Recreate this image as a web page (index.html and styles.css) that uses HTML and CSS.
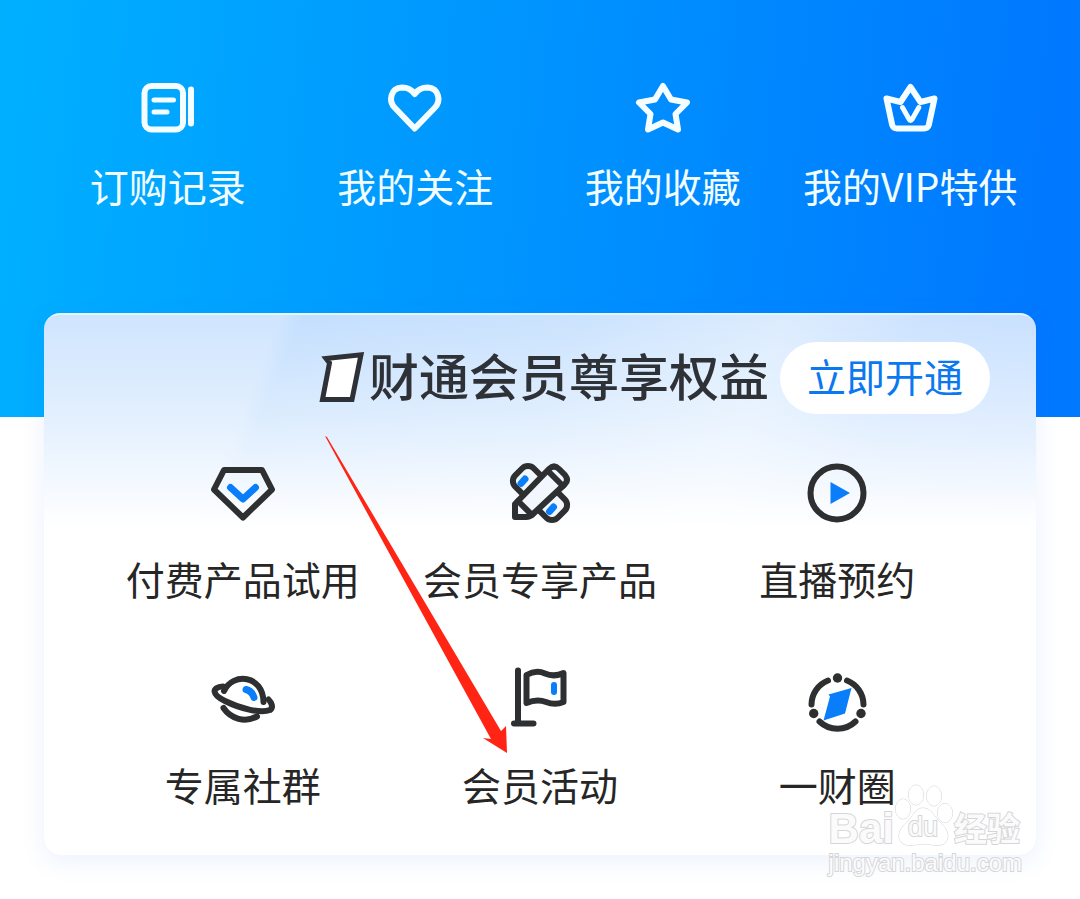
FILE: index.html
```html
<!DOCTYPE html>
<html lang="zh-CN">
<head>
<meta charset="utf-8">
<meta name="viewport" content="width=device-width, initial-scale=1">
<title>会员中心</title>
<link rel="stylesheet" href="styles.css">
</head>
<body>
<main class="page">
  <header class="hero">
    <nav class="shortcuts">
      <a class="entry" href="#orders">
        <svg class="icon light" viewBox="0 0 80 80" aria-hidden="true"><rect x="16.5" y="18" width="38.5" height="43.5" rx="7"/><path d="M63 21.500V55.500"/><path class="fine" d="M26 32H45.500M26 44H39"/></svg>
        <span class="label">订购记录</span>
      </a>
      <a class="entry" href="#follow">
        <svg class="icon light" viewBox="0 0 80 80" aria-hidden="true"><path d="M39.7 60.5L20 40C13 33 15.500 20 27 19.500C33 19.500 37 22 39.700 26C42.500 22 46.500 19.500 52.500 19.500C64 20 66.500 33 59.500 40Z"/></svg>
        <span class="label">我的关注</span>
      </a>
      <a class="entry" href="#favorites">
        <svg class="icon light" viewBox="0 0 80 80" aria-hidden="true"><path d="M40 18L48 31.500L64 34.500L52.500 46L55 61.500L40 54.500L25 61.500L27.500 46L16 34.500L32 31.500Z"/></svg>
        <span class="label">我的收藏</span>
      </a>
      <a class="entry" href="#vip">
        <svg class="icon light" viewBox="0 0 80 80" aria-hidden="true"><path d="M40.500 19L50.500 34L64.500 30.500L58.800 57Q57.800 60.500 54 60.500H27Q23.200 60.500 22.200 57L16.500 30.500L30.500 34Z"/><path class="fine" d="M32.500 39.500L39.300 51.500Q40.700 53.500 42 51.500L48.800 39.500"/></svg>
        <span class="label">我的VIP特供</span>
      </a>
    </nav>
  </header>

  <section class="card">
    <div class="card-head">
      <h1 class="title">
        <svg class="mark" viewBox="0 0 48 56" aria-hidden="true"><path d="M8 8.500L43 4.800L34 49.500H4.500L11.500 13Z"/></svg>
        <span class="title-text">财通会员尊享权益</span>
      </h1>
      <button class="open" type="button">立即开通</button>
    </div>
    <div class="benefits">
      <a class="entry" href="#trial">
        <svg class="icon dark" viewBox="0 0 80 80" aria-hidden="true"><path d="M21 17H59L69 36.500L40 64.500L11 36.500Z"/><path class="accent" d="M27.500 34.500L40 46L52.500 34.500"/></svg>
        <span class="label">付费产品试用</span>
      </a>
      <a class="entry" href="#exclusive">
        <svg class="icon dark" viewBox="0 0 80 80" aria-hidden="true"><rect class="pale" x="10" y="27" width="60" height="26" rx="8" transform="rotate(45 40 40)"/><path class="accent" d="M25 26L21 30.500M53.500 54L49.500 58.500"/><path class="pale" d="M15 64V51L49 16Q54 11 59 16L65 22Q69 27 65 31L33 61Q30 64 26 64Z"/><path d="M49 19L63 33M18 48L32 62"/></svg>
        <span class="label">会员专享产品</span>
      </a>
      <a class="entry" href="#live">
        <svg class="icon dark" viewBox="0 0 80 80" aria-hidden="true"><circle cx="40" cy="40" r="26.500"/><path class="solid" d="M33.500 29L53 40L33.500 51Z"/></svg>
        <span class="label">直播预约</span>
      </a>
      <a class="entry" href="#community">
        <svg class="icon dark thin" viewBox="0 0 80 80" aria-hidden="true"><path d="M21 32C30 13 60 16 60.500 43"/><path d="M20 27.500C8 28 9 36 22 42C38 50 58 54.500 67 51C71 48 68 43 65.500 40.500"/><path d="M20.500 49C28 60 42 64 54 57.500"/><path class="accent" d="M43 30.500Q49 32 51 38.500"/></svg>
        <span class="label">专属社群</span>
      </a>
      <a class="entry" href="#events">
        <svg class="icon dark thin" viewBox="0 0 80 80" aria-hidden="true"><path d="M18 11.500V64.500M14 64.500H33.500"/><path d="M26.500 16Q36 10.500 45 14.500T63.500 14V43Q55 46.500 46 43T26.500 44Z"/><path class="accent fine" d="M54 26V33"/></svg>
        <span class="label">会员活动</span>
      </a>
      <a class="entry" href="#circle">
        <svg class="icon dark thin" viewBox="0 0 80 80" aria-hidden="true"><path d="M14.500 45.500A26 26 0 0 1 31 21.500M50 21.500A26 26 0 0 1 66.500 45.500M22.500 62.500A26 26 0 0 0 58.500 62.500"/><g class="dots"><circle cx="40.500" cy="19" r="4.700"/><circle cx="16.700" cy="54.500" r="4.700"/><circle cx="64" cy="54.500" r="4.700"/></g><path class="solid" d="M31.500 35.500L54.500 29L48 54.500L26.500 61.500L33 37.500Z"/></svg>
        <span class="label">一财圈</span>
      </a>
    </div>
    <svg class="arrow" viewBox="0 0 184 318" aria-hidden="true"><path d="M0 0L2 1L176 295L181 290L182 317L158 302L166 303Z"/></svg>
    <div class="watermark">
      <div class="wm-brand">
        <span class="wm-latin">Bai</span>
        <span class="wm-paw"><svg viewBox="0 0 60 64" aria-hidden="true"><ellipse cx="9" cy="26" rx="7.500" ry="10"/><ellipse cx="22" cy="12" rx="7.500" ry="10"/><ellipse cx="40" cy="13" rx="7.500" ry="10"/><ellipse cx="51" cy="30" rx="7.500" ry="9.500"/><path d="M29 25C21 25 19 34 13 39C5 46 3 53 7 59C12 65 21 61 30 61C38 61 47 65 52 59C56 52 53 46 47 40C40 34 38 25 29 25Z"/></svg><span class="wm-du">du</span></span>
        <span class="wm-cjk">经验</span>
      </div>
      <div class="wm-url">jingyan.baidu.com</div>
    </div>
  </section>
</main>
</body>
</html>
```

FILE: styles.css
```css
* { box-sizing: border-box; }

body {
  margin: 0;
  background: #fff;
  font-family: "Noto Sans CJK SC", "Noto Sans", sans-serif;
  color: #262626;
}

.page { padding-bottom: 44px; }

.hero {
  padding: 68px 46px 207px 44px;
  background: linear-gradient(95deg, #00b0ff 0%, #0078ff 96%);
}

.shortcuts {
  display: grid;
  grid-template-columns: repeat(4, 1fr);
}

.entry {
  display: flex;
  flex-direction: column;
  align-items: center;
  color: inherit;
  text-decoration: none;
  white-space: nowrap;
}

.label {
  font-size: 39px;
  line-height: 50px;
}

.shortcuts .entry { gap: 12px; color: #f2fdff; }
.benefits .entry { gap: 20px; }

.icon {
  width: 80px;
  height: 80px;
  fill: none;
  stroke-linecap: round;
  stroke-linejoin: round;
}

.light { stroke: #f4fdff; stroke-width: 6; }
.light .fine { stroke-width: 5; }
.dark { stroke: #2d2f31; stroke-width: 6; }
.thin { stroke-width: 6; }
.accent { stroke: #0a7dfa; stroke-width: 7; }
.accent.fine { stroke-width: 6; }
.pale { fill: #f2f7fe; }
.solid { fill: #0a7dfa; stroke: none; }
.dots { fill: #2d2f31; stroke: none; }

.card {
  position: relative;
  margin: -104px 44px 0;
  padding: 27px 46px 46px 50px;
  border-top: 2px solid #e2f7ff;
  border-radius: 16px;
  background:
    linear-gradient(180deg, rgba(255, 255, 255, 0) 0, rgba(255, 255, 255, 0.4) 100px, #fff 212px),
    linear-gradient(112deg, #cfe5fe 0, #cfe5fe 220px, #c4dffe 240px, #cbe3fe 500px, #dcecfe 690px, #cbe2ff 820px, #c5dfff 100%);
  box-shadow: 0 6px 24px rgba(60, 120, 240, 0.1);
}

.card-head {
  display: flex;
  justify-content: flex-end;
  align-items: center;
  gap: 11px;
}

.title {
  display: flex;
  align-items: center;
  gap: 3px;
  margin: 0;
  font-size: 50px;
  font-weight: 500;
  line-height: 64px;
  white-space: nowrap;
  color: #2e3136;
}

.title-text { padding-bottom: 8px; }

.mark {
  width: 48px;
  height: 56px;
  fill: #fff;
  stroke: #2e3136;
  stroke-width: 5;
}

.open {
  width: 210px;
  height: 72px;
  padding: 0 0 6px;
  border: 0;
  border-radius: 36px;
  background: #fff;
  color: #0a78ef;
  font: inherit;
  font-size: 39px;
  line-height: 66px;
}

.benefits {
  display: grid;
  grid-template-columns: repeat(3, 1fr);
  row-gap: 56px;
  margin: 39px 4px 0 0;
}

.arrow {
  position: absolute;
  left: 281px;
  top: 121px;
  width: 184px;
  height: 318px;
  fill: #ff2414;
}

.watermark {
  position: absolute;
  right: 14px;
  bottom: -24px;
  color: #fbfbfc;
  -webkit-text-stroke: 2px #d6d6d8;
  paint-order: stroke fill;
}

.wm-brand {
  display: flex;
  align-items: flex-end;
  height: 64px;
}

.wm-latin {
  font: 700 42px/36px "Liberation Sans", sans-serif;
}

.wm-paw {
  position: relative;
  width: 60px;
  height: 64px;
}

.wm-paw svg {
  display: block;
  fill: rgba(255, 255, 255, 0.9);
  stroke: #d6d6d8;
}

.wm-du {
  position: absolute;
  left: 14px;
  top: 29px;
  font: 27px/30px "Liberation Sans", sans-serif;
}

.wm-cjk {
  font-size: 33px;
  font-weight: 700;
  line-height: 40px;
}

.wm-url {
  font: 24px/32px "Liberation Sans", sans-serif;
}
```
